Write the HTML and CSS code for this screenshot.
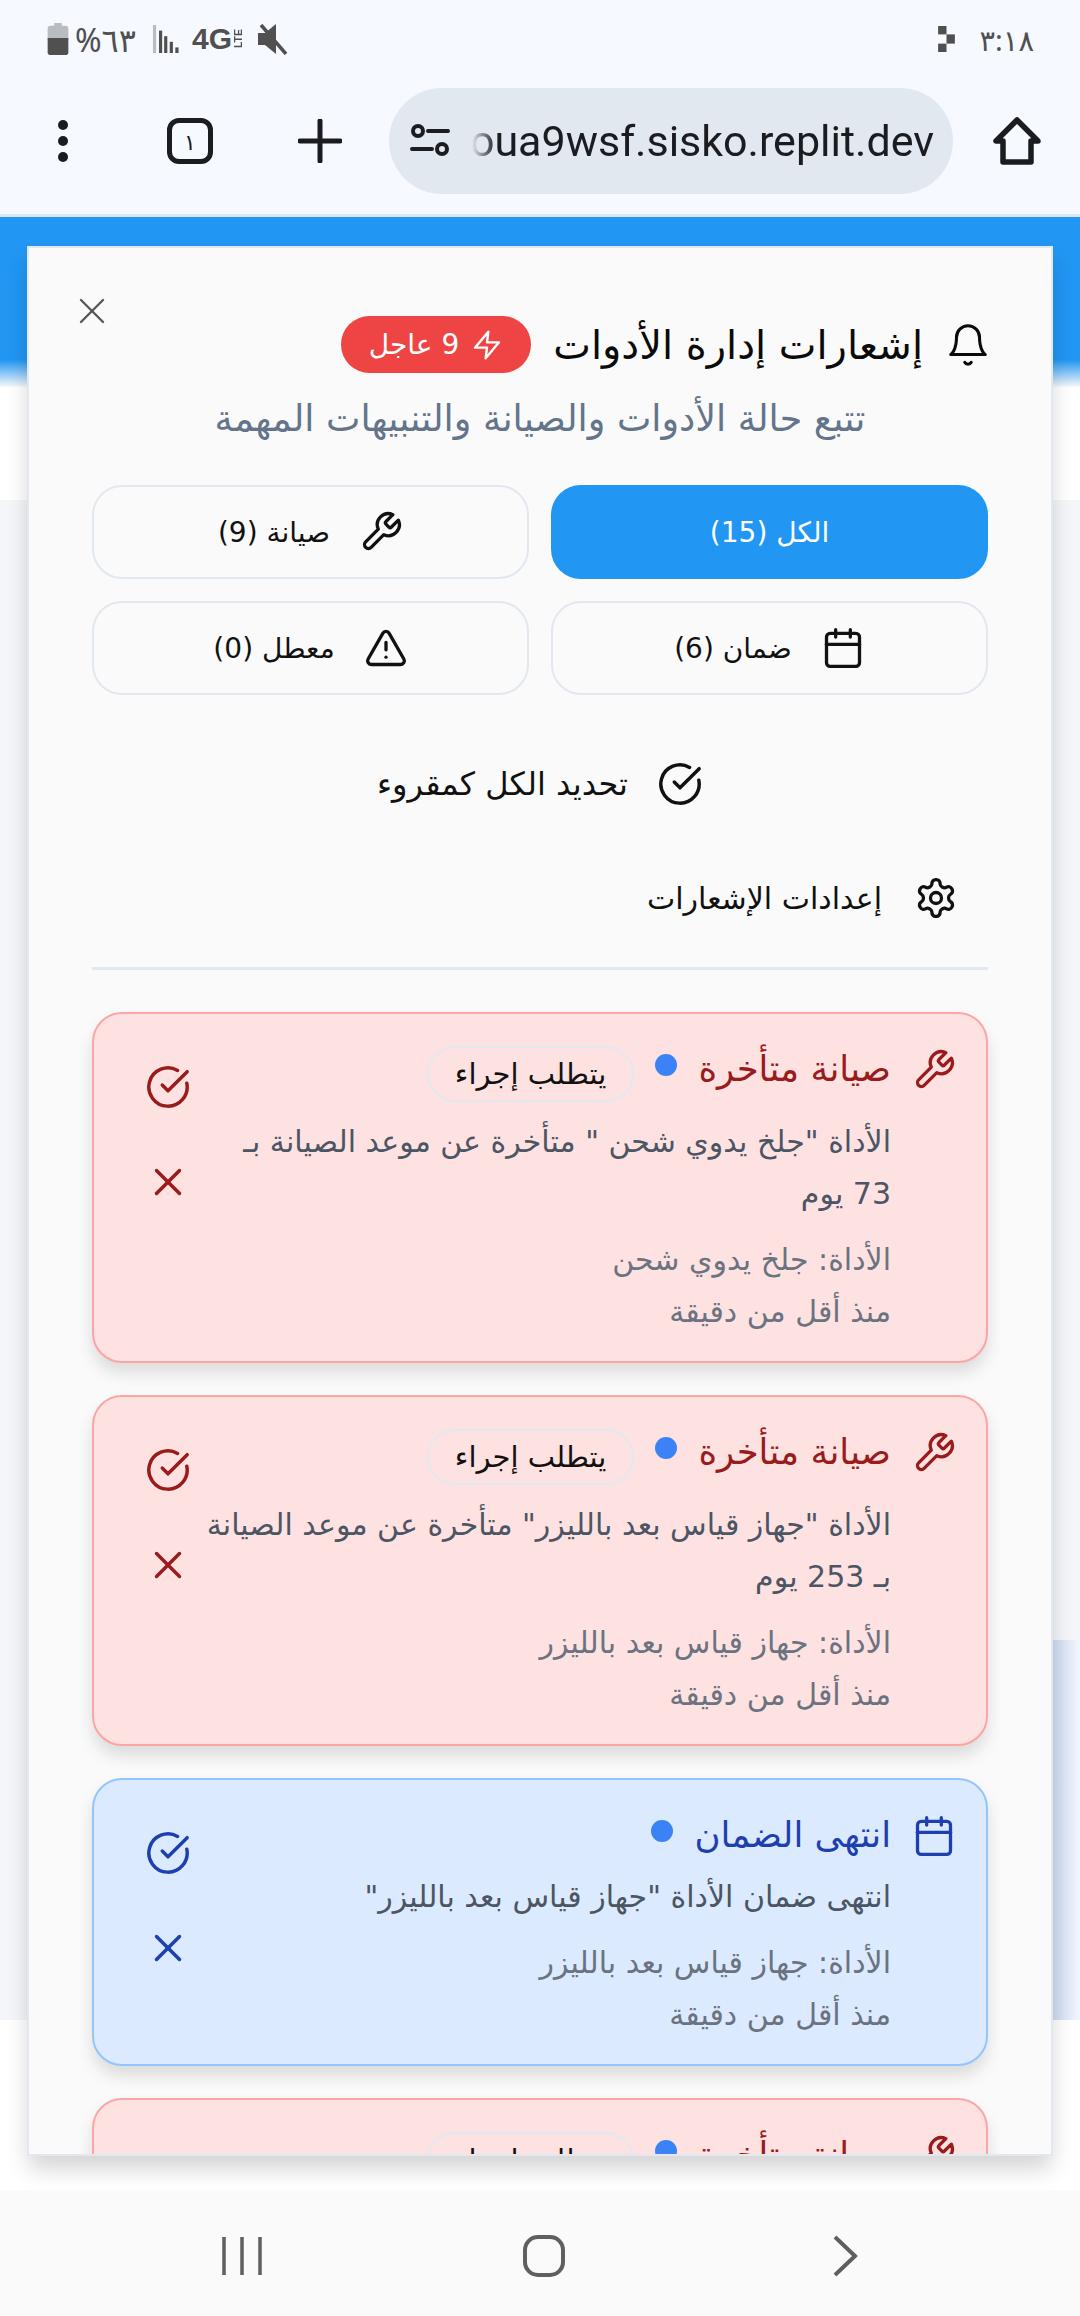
FILE: index.html
```html
<!DOCTYPE html>
<html lang="ar" dir="rtl">
<head>
  <meta charset="UTF-8" />
  <title>إشعارات إدارة الأدوات</title>
  <link rel="stylesheet" href="styles.css">
</head>
<body>
  <svg class="sprite" xmlns="http://www.w3.org/2000/svg">
    <symbol id="i-bell" viewBox="0 0 24 24"><path d="M6 8a6 6 0 0 1 12 0c0 7 3 9 3 9H3s3-2 3-9"/><path d="M10.3 21a1.94 1.94 0 0 0 3.4 0"/></symbol>
    <symbol id="i-zap" viewBox="0 0 24 24"><path d="M13 2 3 14h9l-1 8 10-12h-9l1-8z"/></symbol>
    <symbol id="i-wrench" viewBox="0 0 24 24"><path d="M14.7 6.3a1 1 0 0 0 0 1.4l1.6 1.6a1 1 0 0 0 1.4 0l3.77-3.77a6 6 0 0 1-7.94 7.94l-6.91 6.91a2.12 2.12 0 0 1-3-3l6.91-6.91a6 6 0 0 1 7.94-7.94l-3.76 3.76z"/></symbol>
    <symbol id="i-calendar" viewBox="0 0 24 24"><path d="M8 2v4"/><path d="M16 2v4"/><rect x="3" y="4" width="18" height="18" rx="2"/><path d="M3 10h18"/></symbol>
    <symbol id="i-alert" viewBox="0 0 24 24"><path d="m21.73 18-8-14a2 2 0 0 0-3.48 0l-8 14A2 2 0 0 0 4 21h16a2 2 0 0 0 1.73-3"/><path d="M12 9v4"/><path d="M12 17h.01"/></symbol>
    <symbol id="i-check" viewBox="0 0 24 24"><path d="M21.801 10A10 10 0 1 1 17 3.335"/><path d="m9 11 3 3L22 4"/></symbol>
    <symbol id="i-x" viewBox="0 0 24 24"><path d="M18 6 6 18"/><path d="m6 6 12 12"/></symbol>
    <symbol id="i-gear" viewBox="0 0 24 24"><path d="M12.22 2h-.44a2 2 0 0 0-2 2v.18a2 2 0 0 1-1 1.73l-.43.25a2 2 0 0 1-2 0l-.15-.08a2 2 0 0 0-2.73.73l-.22.38a2 2 0 0 0 .73 2.73l.15.1a2 2 0 0 1 1 1.72v.51a2 2 0 0 1-1 1.74l-.15.09a2 2 0 0 0-.73 2.73l.22.38a2 2 0 0 0 2.73.73l.15-.08a2 2 0 0 1 2 0l.43.25a2 2 0 0 1 1 1.73V20a2 2 0 0 0 2 2h.44a2 2 0 0 0 2-2v-.18a2 2 0 0 1 1-1.73l.43-.25a2 2 0 0 1 2 0l.15.08a2 2 0 0 0 2.73-.73l.22-.39a2 2 0 0 0-.73-2.73l-.15-.08a2 2 0 0 1-1-1.74v-.5a2 2 0 0 1 1-1.74l.15-.09a2 2 0 0 0 .73-2.73l-.22-.38a2 2 0 0 0-2.73-.73l-.15.08a2 2 0 0 1-2 0l-.43-.25a2 2 0 0 1-1-1.73V4a2 2 0 0 0-2-2z"/><circle cx="12" cy="12" r="3"/></symbol>
  </svg>

  <div class="statusbar" dir="ltr">
    <div class="status-left">
      <svg class="batt" viewBox="0 0 22 34"><path class="batt-top" d="M7 0h8v3h4a3 3 0 0 1 3 3v12H0V6a3 3 0 0 1 3-3h4z"/><path class="batt-low" d="M0 16h22v15a3 3 0 0 1-3 3H3a3 3 0 0 1-3-3z"/></svg>
      <span class="batt-text">%٦٣</span>
      <svg class="signal" viewBox="0 0 28 30"><rect class="sig-off" x="0" y="0" width="3.4" height="30"/><rect x="6.5" y="6" width="3.4" height="24"/><rect x="12" y="12" width="3.4" height="18"/><rect x="18" y="18" width="3.4" height="12"/><rect x="24" y="24" width="3.4" height="6"/></svg>
      <span class="net">4G</span>
      <span class="lte">LTE</span>
      <svg class="mute" viewBox="0 0 30 32"><path d="M0 10h7L18 1v30L7 22H0z"/><path class="mute-line" d="M3 2l25 29"/></svg>
    </div>
    <div class="status-right">
      <svg class="cast" viewBox="0 0 20 31"><rect x="0" y="0" width="10" height="10"/><rect x="10" y="10" width="10" height="11"/><rect x="0" y="21" width="10" height="10"/></svg>
      <span class="clock">٣:١٨</span>
    </div>
  </div>

  <div class="toolbar" dir="ltr">
    <svg class="tool-menu" viewBox="0 0 12 44"><circle cx="6" cy="6" r="5"/><circle cx="6" cy="22" r="5"/><circle cx="6" cy="38" r="5"/></svg>
    <div class="tabs">١</div>
    <svg class="tool-plus" viewBox="0 0 44 44"><path d="M22 2v40M2 22h40"/></svg>
    <div class="urlbar">
      <svg class="tune" viewBox="0 0 40 34"><circle cx="8" cy="7" r="5"/><path d="M18 7h20M2 25h20"/><circle cx="32" cy="25" r="5"/></svg>
      <div class="url"><span>oua9wsf.sisko.replit.dev</span></div>
    </div>
    <svg class="tool-home" viewBox="0 0 48 48"><path d="M24 3 3 24h7v21h28V24h7z"/></svg>
  </div>

  <main class="page">
    <div class="page-blue"></div>
    <div class="bg-panel"></div>
    <div class="bg-card"></div>

    <section class="modal">
      <button class="close"><svg class="ic"><use href="#i-x"/></svg></button>

      <header class="modal-head">
        <div class="head-row">
          <svg class="ic ic-bell"><use href="#i-bell"/></svg>
          <h2>إشعارات إدارة الأدوات</h2>
          <span class="urgent"><svg class="ic"><use href="#i-zap"/></svg>9 عاجل</span>
        </div>
        <p class="subtitle">تتبع حالة الأدوات والصيانة والتنبيهات المهمة</p>
      </header>

      <div class="filters">
        <button class="filter active">الكل (15)</button>
        <button class="filter"><svg class="ic"><use href="#i-wrench"/></svg>صيانة (9)</button>
        <button class="filter"><svg class="ic"><use href="#i-calendar"/></svg>ضمان (6)</button>
        <button class="filter"><svg class="ic"><use href="#i-alert"/></svg>معطل (0)</button>
      </div>

      <button class="mark-all"><svg class="ic"><use href="#i-check"/></svg>تحديد الكل كمقروء</button>
      <button class="settings"><svg class="ic"><use href="#i-gear"/></svg>إعدادات الإشعارات</button>
      <hr class="sep" />

      <div class="list">
        <article class="card red">
          <div class="card-main">
            <div class="card-title">
              <svg class="ic"><use href="#i-wrench"/></svg>
              <h3>صيانة متأخرة</h3>
              <span class="dot"></span>
              <span class="tag">يتطلب إجراء</span>
            </div>
            <p class="msg">الأداة "جلخ يدوي شحن " متأخرة عن موعد الصيانة بـ<br>73 يوم</p>
            <p class="meta">الأداة: جلخ يدوي شحن</p>
            <p class="meta">منذ أقل من دقيقة</p>
          </div>
          <div class="card-actions">
            <svg class="ic"><use href="#i-check"/></svg>
            <svg class="ic"><use href="#i-x"/></svg>
          </div>
        </article>

        <article class="card red">
          <div class="card-main">
            <div class="card-title">
              <svg class="ic"><use href="#i-wrench"/></svg>
              <h3>صيانة متأخرة</h3>
              <span class="dot"></span>
              <span class="tag">يتطلب إجراء</span>
            </div>
            <p class="msg">الأداة "جهاز قياس بعد بالليزر" متأخرة عن موعد الصيانة<br>بـ 253 يوم</p>
            <p class="meta">الأداة: جهاز قياس بعد بالليزر</p>
            <p class="meta">منذ أقل من دقيقة</p>
          </div>
          <div class="card-actions">
            <svg class="ic"><use href="#i-check"/></svg>
            <svg class="ic"><use href="#i-x"/></svg>
          </div>
        </article>

        <article class="card blue">
          <div class="card-main">
            <div class="card-title">
              <svg class="ic"><use href="#i-calendar"/></svg>
              <h3>انتهى الضمان</h3>
              <span class="dot"></span>
            </div>
            <p class="msg">انتهى ضمان الأداة "جهاز قياس بعد بالليزر"</p>
            <p class="meta">الأداة: جهاز قياس بعد بالليزر</p>
            <p class="meta">منذ أقل من دقيقة</p>
          </div>
          <div class="card-actions">
            <svg class="ic"><use href="#i-check"/></svg>
            <svg class="ic"><use href="#i-x"/></svg>
          </div>
        </article>

        <article class="card red">
          <div class="card-main">
            <div class="card-title">
              <svg class="ic"><use href="#i-wrench"/></svg>
              <h3>صيانة متأخرة</h3>
              <span class="dot"></span>
              <span class="tag">يتطلب إجراء</span>
            </div>
          </div>
        </article>
      </div>
    </section>
  </main>

  <nav class="navbar" dir="ltr">
    <svg class="nav-recent" viewBox="0 0 42 40"><path d="M3 1v38M21 1v38M39 1v38"/></svg>
    <svg class="nav-home" viewBox="0 0 42 42"><rect x="2" y="2" width="38" height="38" rx="13"/></svg>
    <svg class="nav-back" viewBox="0 0 26 42"><path d="M3 2l20 19L3 40"/></svg>
  </nav>
</body>
</html>
```

FILE: styles.css
```css
* {
  box-sizing: border-box;
}
html, body {
  margin: 0;
  height: 100%;
}
body {
  width: 1080px;
  height: 2316px;
  display: flex;
  flex-direction: column;
  overflow: hidden;
  background: #fff;
  font-family: "DejaVu Sans", "Noto Sans", sans-serif;
  color: #111;
}
button {
  font: inherit;
  color: inherit;
  background: none;
  border: none;
  padding: 0;
}
h2, h3, p {
  margin: 0;
  font-weight: 400;
}
.sprite {
  display: none;
}
.ic {
  width: 44px;
  height: 44px;
  flex: none;
  fill: none;
  stroke: currentColor;
  stroke-width: 1.8;
  stroke-linecap: round;
  stroke-linejoin: round;
}

/* status bar */
.statusbar {
  height: 70px;
  flex: none;
  display: flex;
  justify-content: space-between;
  align-items: center;
  padding: 8px 46px 0 47px;
  background: #f6f9ff;
  color: #505050;
}
.status-left, .status-right {
  display: flex;
  align-items: center;
}
.batt {
  width: 22px;
  height: 32px;
}
.batt-top {
  fill: #b9bcc0;
}
.batt-low {
  fill: #505050;
}
.batt-text {
  font-family: "Noto Sans", "DejaVu Sans", sans-serif;
  font-size: 32px;
  margin-left: 6px;
}
.signal {
  width: 28px;
  height: 28px;
  margin-left: 16px;
  fill: #505050;
}
.sig-off {
  fill: #b9bcc0;
}
.net {
  font-family: "Liberation Sans", sans-serif;
  font-weight: 700;
  font-size: 30px;
  margin-left: 12px;
}
.lte {
  font-family: "Liberation Sans", sans-serif;
  font-size: 10.5px;
  line-height: 9px;
  font-weight: 700;
  writing-mode: vertical-rl;
  transform: rotate(180deg);
  margin-left: 2px;
}
.mute {
  width: 30px;
  height: 32px;
  margin-left: 15px;
  fill: #505050;
}
.mute-line {
  stroke: #505050;
  stroke-width: 3.5;
  fill: none;
}
.cast {
  width: 21px;
  height: 26px;
  fill: #505050;
}
.clock {
  font-family: "Noto Sans", "DejaVu Sans", sans-serif;
  font-size: 29px;
  margin-left: 22px;
}

/* browser toolbar */
.toolbar {
  height: 147px;
  flex: none;
  display: flex;
  align-items: center;
  padding: 0 20px 2px 57px;
  background: #f6f9ff;
  color: #1a1c20;
  border-bottom: 3px solid #dfe6ef;
}
.tool-menu {
  width: 12px;
  height: 44px;
  fill: currentColor;
}
.tabs {
  width: 46px;
  height: 46px;
  margin-left: 98px;
  border: 5px solid currentColor;
  border-radius: 12px;
  display: flex;
  align-items: center;
  justify-content: center;
  font-family: "Noto Sans", "DejaVu Sans", sans-serif;
  font-size: 22px;
}
.tool-plus {
  width: 44px;
  height: 44px;
  margin-left: 85px;
  stroke: currentColor;
  stroke-width: 5;
  stroke-linecap: round;
  fill: none;
}
.urlbar {
  width: 564px;
  height: 106px;
  margin-left: 47px;
  display: flex;
  align-items: center;
  padding: 0 19px 0 21px;
  border-radius: 53px;
  background: #e2e8f0;
}
.tune {
  width: 40px;
  height: 34px;
  flex: none;
  fill: none;
  stroke: currentColor;
  stroke-width: 4;
  stroke-linecap: round;
}
.url {
  flex: 1;
  min-width: 0;
  margin-left: 22px;
  display: flex;
  justify-content: flex-end;
  overflow: hidden;
  font-family: "Roboto", sans-serif;
  font-size: 43px;
  white-space: nowrap;
  -webkit-mask-image: linear-gradient(to right, transparent, #000 24px);
  mask-image: linear-gradient(to right, transparent, #000 24px);
}
.url span {
  flex: none;
}
.tool-home {
  width: 48px;
  height: 48px;
  margin-left: 40px;
  fill: none;
  stroke: currentColor;
  stroke-width: 5.5;
  stroke-linejoin: round;
}

/* page behind the dialog */
.page {
  flex: 1;
  position: relative;
  overflow: hidden;
}
.page-blue {
  height: 170px;
  background: linear-gradient(#2196f3 84%, #f8f9fa);
}
.bg-panel {
  position: absolute;
  left: 0;
  right: 0;
  top: 283px;
  height: 1520px;
  background: #f5f6f9;
}
.bg-card {
  position: absolute;
  right: 0;
  top: 1423px;
  width: 27px;
  height: 380px;
  background: linear-gradient(to right, #cddbf3, #f2f5fc);
}

/* dialog */
.modal {
  position: absolute;
  left: 27px;
  top: 29px;
  width: 1026px;
  height: 1910px;
  padding: 68px 63px 0;
  overflow: hidden;
  background: #fafafa;
  border: 2px solid #e2e8f0;
  box-shadow: 0 14px 22px -2px rgba(0, 0, 0, 0.18);
}
.close {
  position: absolute;
  left: 41px;
  top: 41px;
  width: 44px;
  height: 44px;
  color: #555;
}
.close .ic {
  stroke-width: 1.3;
}
.modal-head {
  color: #0a0a0a;
}
.head-row {
  display: flex;
  align-items: center;
  gap: 22px;
  height: 57px;
}
.ic-bell {
  width: 46px;
  height: 46px;
  margin-right: -3px;
  stroke-width: 1.6;
}
.head-row h2 {
  font-size: 40px;
}
.urgent {
  display: flex;
  align-items: center;
  gap: 12px;
  height: 57px;
  padding: 0 28px;
  border-radius: 29px;
  background: #ef4444;
  color: #fff;
  font-size: 28px;
}
.urgent .ic {
  width: 32px;
  height: 32px;
}
.subtitle {
  margin-top: 24px;
  text-align: center;
  font-size: 36.5px;
  color: #64748b;
}

.filters {
  margin-top: 45px;
  display: grid;
  grid-template-columns: 1fr 1fr;
  gap: 22px;
}
.filter {
  height: 94px;
  display: flex;
  align-items: center;
  justify-content: center;
  gap: 29px;
  border: 2px solid #e2e8f0;
  border-radius: 30px;
  font-size: 28px;
}
.filter.active {
  background: #2196f3;
  border-color: #2196f3;
  color: #fff;
}
.mark-all {
  margin-top: 42px;
  width: 100%;
  height: 94px;
  display: flex;
  align-items: center;
  justify-content: center;
  gap: 29px;
  font-size: 32px;
}
.mark-all .ic {
  width: 46px;
  height: 46px;
}
.settings {
  margin-top: 20px;
  width: 100%;
  height: 94px;
  display: flex;
  align-items: center;
  gap: 32px;
  padding: 0 30px;
  font-size: 30px;
}
.sep {
  margin: 22px 0 0;
  border: none;
  border-top: 3px solid #e2e8f0;
}

/* notification cards */
.list {
  margin-top: 42px;
  display: flex;
  flex-direction: column;
  gap: 32px;
}
.card {
  display: flex;
  padding: 32px 30px 23px 36px;
  border: 2px solid;
  border-radius: 30px;
  box-shadow: 0 10px 16px rgba(0, 0, 0, 0.12);
}
.card.red {
  background: #fee2e2;
  border-color: #fca5a5;
  color: #991b1b;
}
.card.blue {
  background: #dbeafe;
  border-color: #93c5fd;
  color: #1e40af;
}
.card-main {
  flex: 1;
  min-width: 0;
}
.card-title {
  display: flex;
  align-items: flex-start;
  gap: 21px;
  min-height: 45px;
}
.card-title .ic {
  margin: 2px 0 -2px 0;
}
.card-title h3 {
  font-size: 35.5px;
  line-height: 44px;
  margin-top: 1px;
}
.card .dot {
  width: 22px;
  height: 22px;
  margin-top: 8px;
  border-radius: 50%;
  background: #3b82f6;
}
.tag {
  height: 56px;
  padding: 0 26px;
  display: flex;
  align-items: center;
  border: 2px solid #e2e8f0;
  border-radius: 28px;
  color: #111;
  font-size: 29px;
}
.msg {
  margin-top: 14px;
  padding-right: 65px;
  font-size: 30px;
  line-height: 52px;
  color: #4b5563;
}
.meta {
  padding-right: 65px;
  font-size: 30px;
  line-height: 52px;
  color: #6b7280;
}
.msg + .meta {
  margin-top: 14px;
}
.card-actions {
  flex: none;
  width: 76px;
  padding-top: 18px;
  display: flex;
  flex-direction: column;
  align-items: center;
  gap: 49px;
}
.card-actions .ic {
  width: 46px;
  height: 46px;
}

/* android nav */
.navbar {
  height: 126px;
  flex: none;
  display: flex;
  align-items: center;
  background: #fafafa;
  padding-top: 6px;
  fill: none;
  stroke: #5f5f5f;
}
.nav-recent {
  width: 42px;
  height: 40px;
  margin-left: 221px;
  stroke-width: 3.5;
}
.nav-home {
  width: 42px;
  height: 42px;
  margin-left: 260px;
  stroke-width: 4;
}
.nav-back {
  width: 26px;
  height: 42px;
  margin-left: 267px;
  stroke-width: 4;
}
```
